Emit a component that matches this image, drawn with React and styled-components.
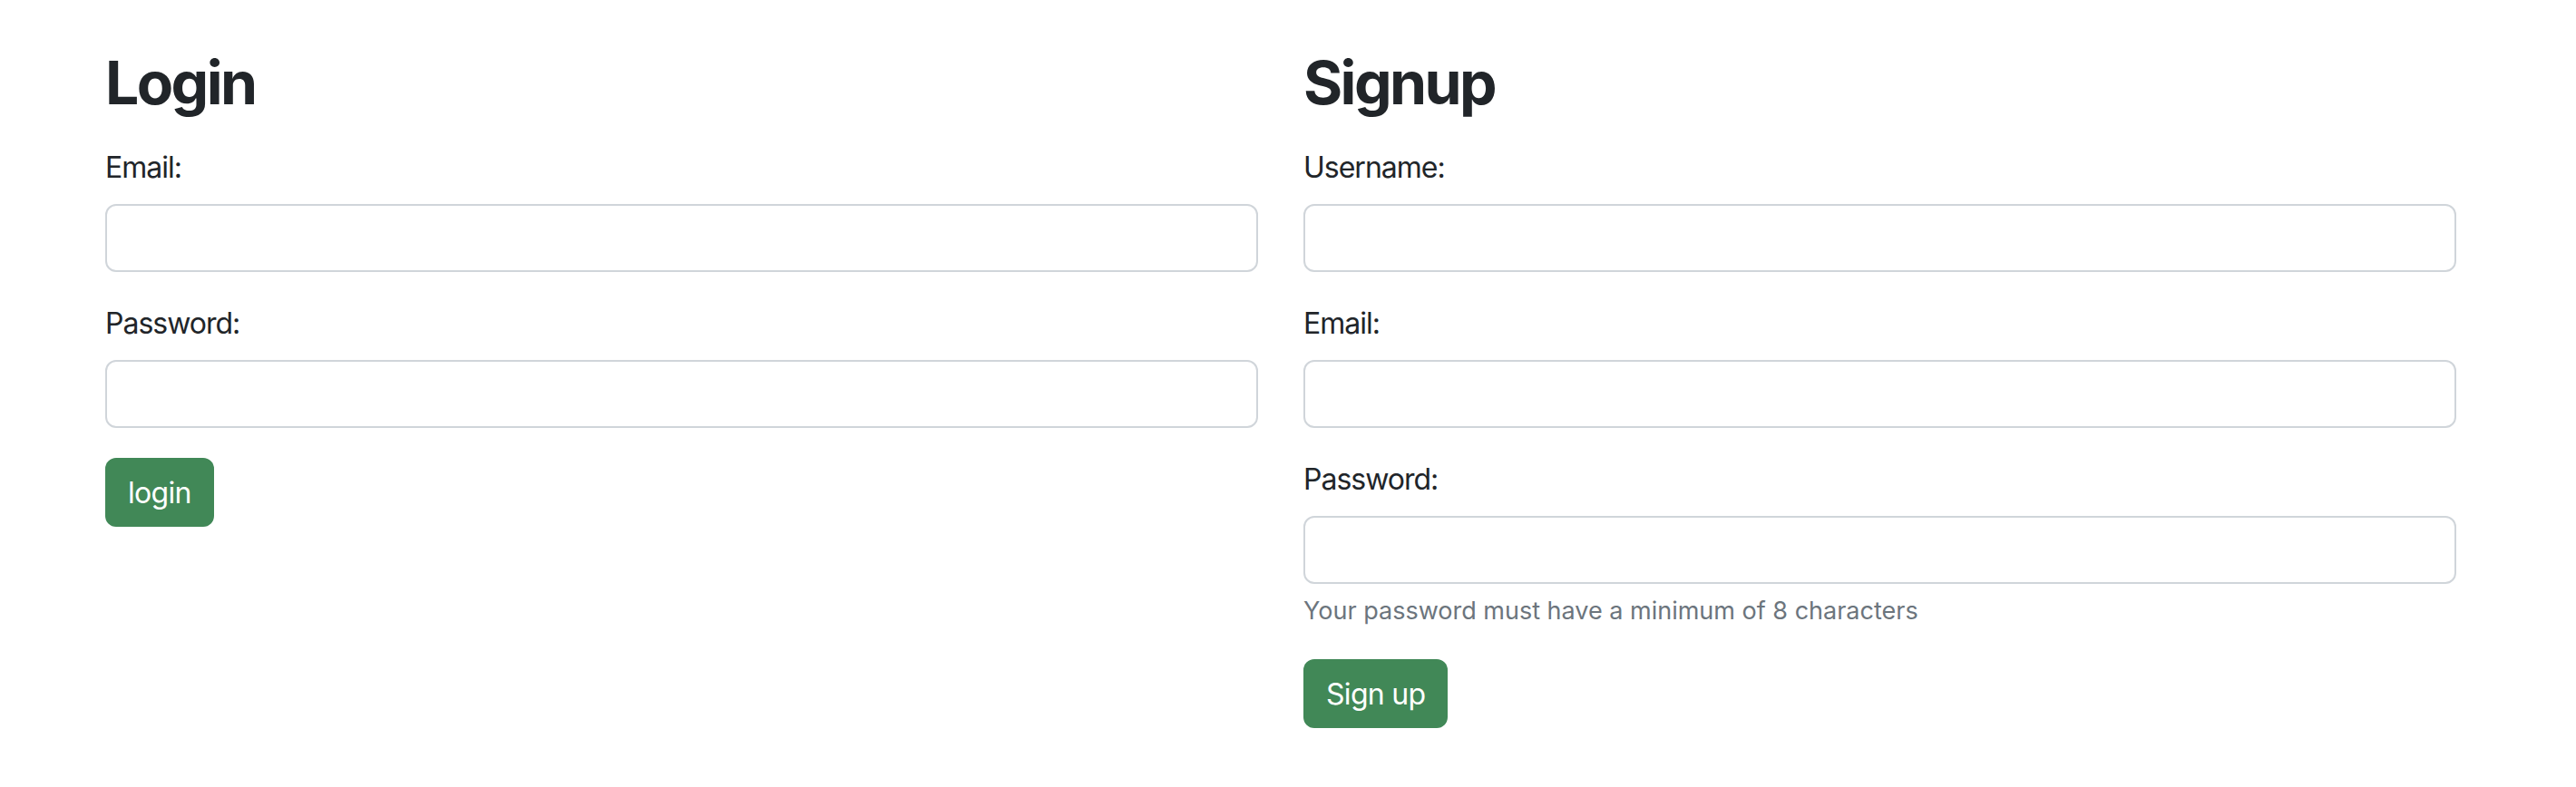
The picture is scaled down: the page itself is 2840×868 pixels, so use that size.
import React from 'react'
import styled, { createGlobalStyle } from 'styled-components'

const TEXT = '#212529'
const MUTED = '#6c757d'
const BORDER = '#d0d5da'
const GREEN = '#418857'

const LOGIN_FIELDS = [
  { id: 'login-email', label: 'Email:', type: 'email' },
  { id: 'login-password', label: 'Password:', type: 'password' }
]

const SIGNUP_FIELDS = [
  { id: 'signup-username', label: 'Username:', type: 'text' },
  { id: 'signup-email', label: 'Email:', type: 'email' },
  {
    id: 'signup-password',
    label: 'Password:',
    type: 'password',
    help: 'Your password must have a minimum of 8 characters'
  }
]

const GlobalStyle = createGlobalStyle`
  * {
    box-sizing: border-box;
  }
  body {
    margin: 0;
    background: #fff;
    color: ${TEXT};
    font-family: Inter, "Noto Sans", sans-serif;
  }
`

const Field = ({ id, label, type, help }) => (
  <Group>
    <Label htmlFor={id}>{label}</Label>
    <Input id={id} type={type} />
    {help && <Help>{help}</Help>}
  </Group>
)

const App = () => (
  <>
    <GlobalStyle />
    <Page>
      <Column>
        <Title>Login</Title>
        {LOGIN_FIELDS.map(field => (
          <Field key={field.id} {...field} />
        ))}
        <Button>login</Button>
      </Column>
      <Column>
        <Title>Signup</Title>
        {SIGNUP_FIELDS.map(field => (
          <Field key={field.id} {...field} />
        ))}
        <Button>Sign up</Button>
      </Column>
    </Page>
  </>
)

const Page = styled.main`
  display: grid;
  grid-template-columns: 1fr 1fr;
  column-gap: 50px;
  padding: 52px 132px 40px 116px;
`

const Column = styled.section`
  display: flex;
  flex-direction: column;
  align-items: flex-start;
`

const Title = styled.h1`
  margin: 0 0 30px;
  font-size: 66px;
  line-height: 1.2;
  font-weight: 700;
  letter-spacing: -2.6px;
`

const Group = styled.div`
  display: flex;
  flex-direction: column;
  width: 100%;
  margin-bottom: 33px;
`

const Label = styled.label`
  font-size: 32px;
  line-height: 48px;
  letter-spacing: -1px;
  margin-bottom: 16px;
`

const Input = styled.input`
  width: 100%;
  height: 75px;
  border: 2px solid ${BORDER};
  border-radius: 12px;
  background: #fff;
  font: inherit;
  font-size: 32px;
  padding: 0 24px;
  outline: none;
`

const Help = styled.div`
  margin-top: 10px;
  font-size: 27px;
  line-height: 40px;
  letter-spacing: 0;
  color: ${MUTED};
`

const Button = styled.button`
  height: 76px;
  padding: 0 25px;
  border: none;
  border-radius: 12px;
  background: ${GREEN};
  color: #fff;
  font-family: inherit;
  font-size: 32px;
  letter-spacing: -0.7px;
  cursor: pointer;
`

export default App
